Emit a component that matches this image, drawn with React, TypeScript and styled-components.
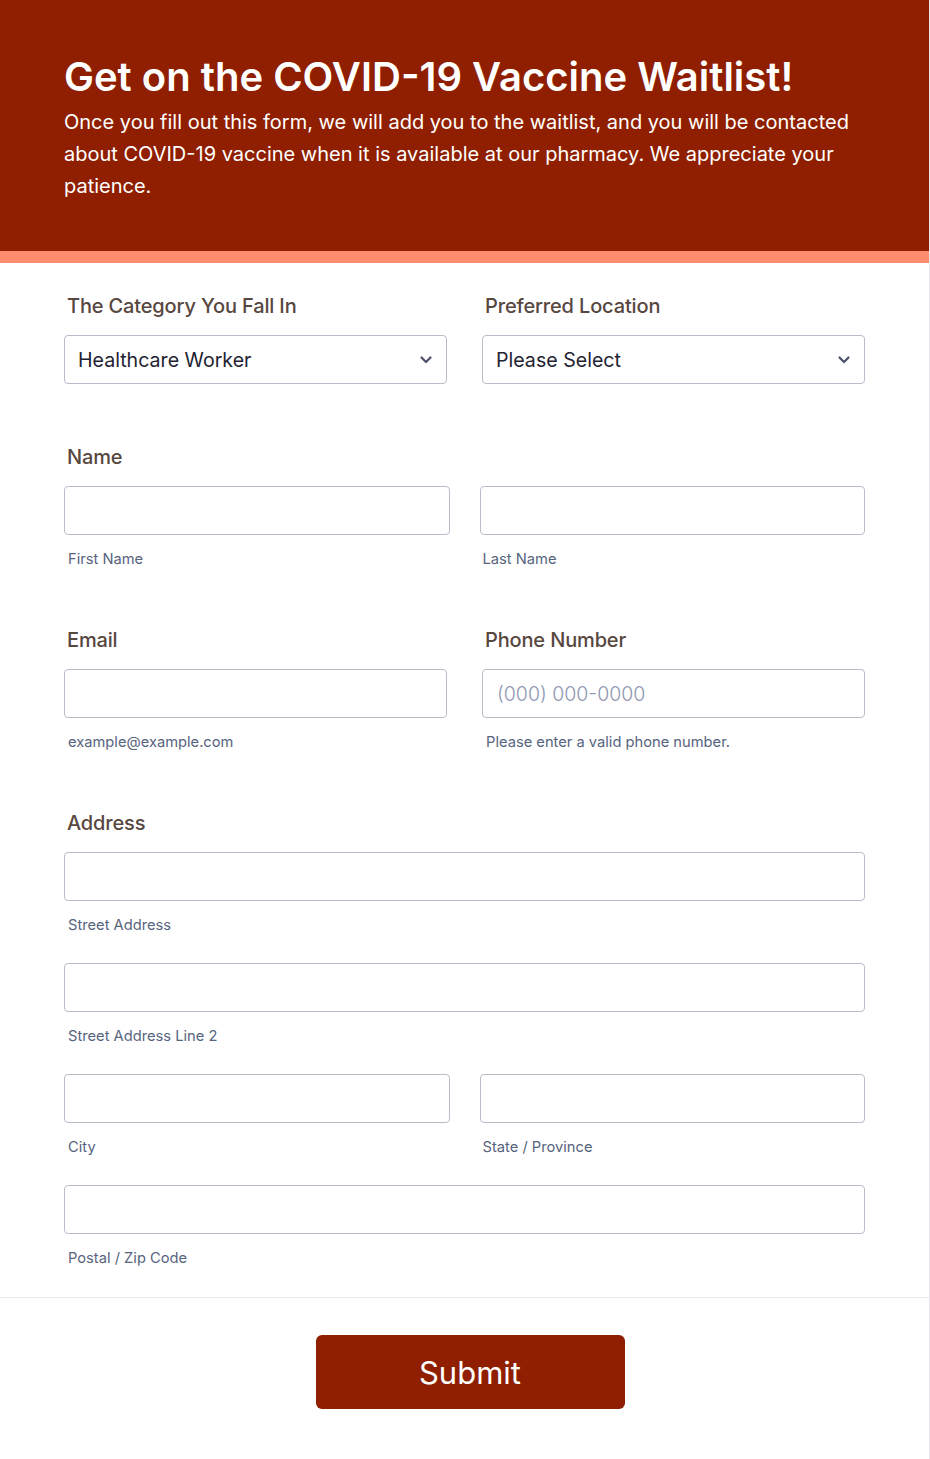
import React from 'react';
import styled, { createGlobalStyle } from 'styled-components';

const GlobalStyle = createGlobalStyle`
  html, body {
    margin: 0;
    padding: 0;
    background: #ffffff;
    font-family: Inter, "Noto Sans", sans-serif;
  }
  * { box-sizing: border-box; }
`;

const Card = styled.div`
  width: 930px;
  min-height: 1459px;
  background: #ffffff;
  border-right: 1px solid #e6e6ec;
`;

// Header
const Header = styled.header`
  background: #8f1f00;
  padding: 53px 64px 49px;
  border-bottom: 12px solid #ff8c6f;
  color: #ffffff;
`;

const Title = styled.h1`
  margin: 0 0 5px;
  font-size: 40px;
  line-height: 48px;
  font-weight: 600;
`;

const Intro = styled.p`
  margin: 0;
  font-size: 20px;
  line-height: 32px;
  font-weight: 400;
`;

// Form
const Form = styled.form`
  padding: 31px 64px 0 64px;
  display: flex;
  flex-direction: column;
  gap: 61px;
`;

const Row = styled.div<{ $gap: number }>`
  display: grid;
  grid-template-columns: 1fr 1fr;
  column-gap: ${(p) => p.$gap}px;
`;

const Field = styled.div`
  display: flex;
  flex-direction: column;
`;

const Stack = styled.div`
  display: flex;
  flex-direction: column;
  gap: 30px;
`;

const Label = styled.label`
  display: block;
  padding-left: 3px;
  margin-bottom: 17px;
  font-size: 20px;
  line-height: 24px;
  font-weight: 500;
  letter-spacing: -0.15px;
  color: #57473f;
`;

const Input = styled.input`
  display: block;
  width: 100%;
  height: 49px;
  padding: 0 14px;
  border: 1px solid #b8bdc9;
  border-radius: 4px;
  background: #ffffff;
  font-family: Inter, sans-serif;
  font-size: 20px;
  color: #2c3345;
  outline: none;
  &::placeholder {
    color: #9097b2;
    font-weight: 300;
    font-size: 19.5px;
  }
`;

const SelectBox = styled.div`
  display: flex;
  align-items: center;
  justify-content: space-between;
  height: 49px;
  padding: 0 13px 0 13px;
  border: 1px solid #b8bdc9;
  border-radius: 4px;
  font-size: 19.6px;
  color: #1f2232;
`;

const Sub = styled.span<{ $inset?: number }>`
  display: block;
  margin-top: 16px;
  padding-left: ${(p) => p.$inset ?? 4}px;
  font-size: 14.7px;
  line-height: 16px;
  color: #57647e;
`;

const Divider = styled.div`
  margin-top: 31px;
  border-top: 1px solid #eaebf0;
`;

const Footer = styled.div`
  display: flex;
  justify-content: center;
  padding: 37px 0 50px;
`;

const SubmitButton = styled.button`
  width: 309px;
  height: 74px;
  margin-left: 11px;
  border: none;
  border-radius: 6px;
  background: #8f1f00;
  color: #ffffff;
  font-family: Inter, sans-serif;
  font-size: 31px;
  font-weight: 400;
  cursor: pointer;
`;

const Chevron = () => (
  <svg width="14" height="9" viewBox="0 0 14 9" fill="none">
    <path d="M2.5 2.5l4.5 4.5 4.5-4.5" stroke="#4b4f6a" strokeWidth="2.2" strokeLinecap="round" strokeLinejoin="round" />
  </svg>
);

const Select = ({ value }: { value: string }) => (
  <SelectBox>
    <span>{value}</span>
    <Chevron />
  </SelectBox>
);

const App = () => (
  <Card>
    <GlobalStyle />
    <Header>
      <Title>Get on the COVID-19 Vaccine Waitlist!</Title>
      <Intro>
        Once you fill out this form, we will add you to the waitlist, and you will be contacted
        about COVID-19 vaccine when it is available at our pharmacy. We appreciate your patience.
      </Intro>
    </Header>

    <Form onSubmit={(e) => e.preventDefault()}>
      <Row $gap={35}>
        <Field>
          <Label>The Category You Fall In</Label>
          <Select value="Healthcare Worker" />
        </Field>
        <Field>
          <Label>Preferred Location</Label>
          <Select value="Please Select" />
        </Field>
      </Row>

      <Field>
        <Label>Name</Label>
        <Row $gap={30}>
          <Field>
            <Input />
            <Sub>First Name</Sub>
          </Field>
          <Field>
            <Input />
            <Sub $inset={3}>Last Name</Sub>
          </Field>
        </Row>
      </Field>

      <Row $gap={35}>
        <Field>
          <Label>Email</Label>
          <Input type="email" />
          <Sub>example@example.com</Sub>
        </Field>
        <Field>
          <Label>Phone Number</Label>
          <Input placeholder="(000) 000-0000" />
          <Sub>Please enter a valid phone number.</Sub>
        </Field>
      </Row>

      <Field>
        <Label>Address</Label>
        <Stack>
          <Field>
            <Input />
            <Sub>Street Address</Sub>
          </Field>
          <Field>
            <Input />
            <Sub>Street Address Line 2</Sub>
          </Field>
          <Row $gap={30}>
            <Field>
              <Input />
              <Sub>City</Sub>
            </Field>
            <Field>
              <Input />
              <Sub $inset={3}>State / Province</Sub>
            </Field>
          </Row>
          <Field>
            <Input />
            <Sub>Postal / Zip Code</Sub>
          </Field>
        </Stack>
      </Field>
    </Form>

    <Divider />
    <Footer>
      <SubmitButton type="submit">Submit</SubmitButton>
    </Footer>
  </Card>
);

export default App;
